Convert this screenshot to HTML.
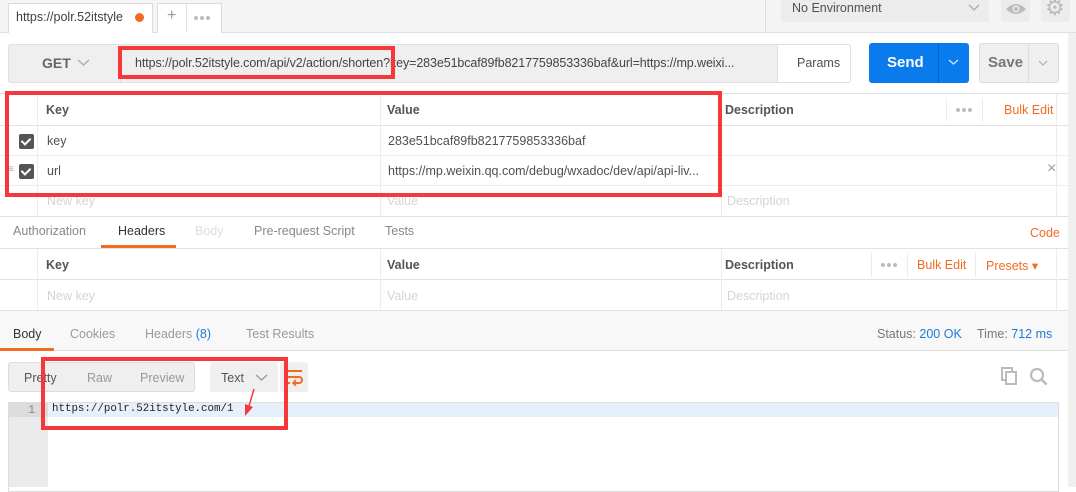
<!DOCTYPE html>
<html><head><meta charset="utf-8"><style>
*{box-sizing:border-box;margin:0;padding:0}
body{width:1076px;height:487px;overflow:hidden;background:#fff;font-family:"Liberation Sans",sans-serif;font-size:12.5px;color:#505050;position:relative}
.a{position:absolute}
.t{position:absolute;white-space:nowrap}
.hl{position:absolute;height:1px;background:#e2e2e2}
.vl{position:absolute;width:1px;background:#ececec}
.or{color:#f26b21}
.ph{color:#d4d4d4}
.b{font-weight:bold;color:#555}
.cb{position:absolute;width:15px;height:15px;background:#555;border-radius:2px}
.cb:after{content:"";position:absolute;left:4px;top:2px;width:4px;height:7px;border:solid #fff;border-width:0 2px 2px 0;transform:rotate(45deg)}
.red{position:absolute;border:4px solid #f7383b}
.dots{position:absolute;width:20px;height:4px;display:flex;gap:2px}
.dots i{display:block;width:4px;height:4px;border-radius:50%;background:#bbb}
</style></head><body>
<!-- tab bar -->
<div class="a" style="left:0;top:0;width:1076px;height:33px;background:#f4f4f4;border-bottom:1px solid #e0e0e0"></div>
<div class="a" style="left:8px;top:3px;width:145px;height:30px;background:#fff;border:1px solid #dcdcdc;border-bottom:none"></div>
<div class="t" style="left:16px;top:10px;color:#404040">https://polr.52itstyle</div>
<div class="a" style="left:135px;top:13px;width:9px;height:9px;border-radius:50%;background:#f26b21"></div>
<div class="a" style="left:157px;top:3px;width:65px;height:30px;background:#fff;border:1px solid #dcdcdc;border-bottom:none"></div>
<div class="vl" style="left:186px;top:4px;height:28px;background:#e0e0e0"></div>
<div class="t" style="left:167px;top:7px;font-size:16px;color:#999">+</div>
<div class="dots" style="left:194px;top:16px"><i></i><i></i><i></i></div>
<div class="vl" style="left:765px;top:0;height:33px;background:#ddd"></div>
<div class="a" style="left:781px;top:0;width:208px;height:22px;background:#ececec;border-radius:0 0 3px 3px"></div>
<div class="t" style="left:792px;top:1px;color:#505050">No Environment</div>
<svg class="a" style="left:968px;top:4px" width="12" height="8"><path d="M1 1l5 5 5-5" stroke="#aaa" fill="none" stroke-width="1.3"/></svg>
<div class="a" style="left:1001px;top:0;width:29px;height:22px;background:#ececec;border-radius:0 0 3px 3px"></div>
<svg class="a" style="left:1005px;top:2px" width="22" height="14"><path d="M1 7Q11-3 21 7Q11 17 1 7Z" fill="#bbb"/><circle cx="11" cy="7" r="3.5" fill="#ececec"/><circle cx="11" cy="7" r="2" fill="#bbb"/></svg>
<div class="a" style="left:1041px;top:0;width:29px;height:22px;background:#ececec;border-radius:0 0 3px 3px"></div>
<div class="t" style="left:1045px;top:-5px;font-size:22px;color:#bbb">⚙</div>
<div class="a" style="left:1068px;top:33px;width:8px;height:454px;background:#f0f0f0"></div>
<!-- request row -->
<div class="a" style="left:8px;top:44px;width:843px;height:39px;background:#efefef;border:1px solid #e0e0e0;border-radius:3px"></div>
<div class="vl" style="left:120px;top:44px;height:39px;background:#e0e0e0"></div>
<div class="t" style="left:42px;top:55px;font-size:14px;font-weight:bold;color:#666">GET</div>
<svg class="a" style="left:77px;top:59px" width="13" height="8"><path d="M1 1l5.5 5 5.5-5" stroke="#aaa" fill="none" stroke-width="1.3"/></svg>
<div class="t" style="left:135px;top:56px;color:#444;letter-spacing:-0.1px">https://polr.52itstyle.com/api/v2/action/shorten?key=283e51bcaf89fb8217759853336baf&amp;url=https://mp.weixi...</div>
<div class="a" style="left:777px;top:44px;width:74px;height:39px;background:#fff;border:1px solid #e0e0e0;border-radius:0 3px 3px 0"></div>
<div class="t" style="left:797px;top:56px">Params</div>
<div class="a" style="left:869px;top:43px;width:100px;height:40px;background:#097bed;border-radius:3px"></div>
<div class="vl" style="left:938px;top:43px;height:40px;background:#0a63c0"></div>
<div class="t" style="left:887px;top:54px;color:#fff;font-weight:bold;font-size:15px">Send</div>
<svg class="a" style="left:948px;top:59px" width="11" height="7"><path d="M1 1l4.5 4 4.5-4" stroke="#cfe4fb" fill="none" stroke-width="1.4"/></svg>
<div class="a" style="left:979px;top:43px;width:80px;height:40px;background:#efefef;border:1px solid #ddd;border-radius:3px"></div>
<div class="vl" style="left:1028px;top:44px;height:38px;background:#ddd"></div>
<div class="t" style="left:988px;top:54px;color:#777;font-weight:bold;font-size:15px">Save</div>
<svg class="a" style="left:1038px;top:60px" width="10" height="6"><path d="M1 1l4 4 4-4" stroke="#aaa" fill="none" stroke-width="1.1"/></svg>
<!-- params table -->
<div class="hl" style="left:0;top:93px;width:1068px"></div>
<div class="hl" style="left:0;top:125px;width:1068px"></div>
<div class="hl" style="left:0;top:155px;width:1068px;background:#eee"></div>
<div class="hl" style="left:0;top:185px;width:1068px;background:#eee"></div>
<div class="hl" style="left:0;top:216px;width:1068px"></div>
<div class="vl" style="left:37px;top:94px;height:122px"></div>
<div class="vl" style="left:380px;top:94px;height:122px"></div>
<div class="vl" style="left:721px;top:94px;height:122px"></div>
<div class="vl" style="left:1056px;top:94px;height:122px"></div>
<div class="t b" style="left:46px;top:103px">Key</div>
<div class="t b" style="left:387px;top:103px">Value</div>
<div class="t b" style="left:725px;top:103px">Description</div>
<div class="vl" style="left:946px;top:98px;height:24px"></div>
<div class="vl" style="left:982px;top:98px;height:24px"></div>
<div class="dots" style="left:956px;top:108px"><i></i><i></i><i></i></div>
<div class="t or" style="left:1004px;top:103px">Bulk Edit</div>
<div class="cb" style="left:19px;top:134px"></div>
<div class="cb" style="left:19px;top:164px"></div>
<div class="t" style="left:8px;top:164px;color:#aaa;font-size:10px">≡</div>
<div class="t" style="left:47px;top:134px">key</div>
<div class="t" style="left:388px;top:134px">283e51bcaf89fb8217759853336baf</div>
<div class="t" style="left:47px;top:164px">url</div>
<div class="t" style="left:388px;top:164px">https://mp.weixin.qq.com/debug/wxadoc/dev/api/api-liv...</div>
<div class="t" style="left:1047px;top:160px;color:#999;font-size:16px">×</div>
<div class="t ph" style="left:47px;top:194px">New key</div>
<div class="t ph" style="left:387px;top:194px">Value</div>
<div class="t ph" style="left:727px;top:194px">Description</div>
<div class="red" style="left:5px;top:91px;width:717px;height:106px"></div>
<div class="red" style="left:118px;top:46px;width:277px;height:33px"></div>
<!-- sub tabs -->
<div class="t" style="left:13px;top:224px;color:#888">Authorization</div>
<div class="t" style="left:118px;top:224px;color:#333">Headers</div>
<div class="a" style="left:101px;top:245px;width:75px;height:3px;background:#f26b21"></div>
<div class="t" style="left:195px;top:224px;color:#ddd">Body</div>
<div class="t" style="left:254px;top:224px;color:#888">Pre-request Script</div>
<div class="t" style="left:385px;top:224px;color:#888">Tests</div>
<div class="t or" style="left:1030px;top:226px">Code</div>
<!-- headers table -->
<div class="hl" style="left:0;top:248px;width:1068px"></div>
<div class="hl" style="left:0;top:279px;width:1068px"></div>
<div class="hl" style="left:0;top:310px;width:1068px"></div>
<div class="vl" style="left:37px;top:249px;height:61px"></div>
<div class="vl" style="left:380px;top:249px;height:61px"></div>
<div class="vl" style="left:721px;top:249px;height:61px"></div>
<div class="vl" style="left:1056px;top:249px;height:61px"></div>
<div class="t b" style="left:46px;top:258px">Key</div>
<div class="t b" style="left:387px;top:258px">Value</div>
<div class="t b" style="left:725px;top:258px">Description</div>
<div class="vl" style="left:871px;top:253px;height:24px"></div>
<div class="vl" style="left:907px;top:253px;height:24px"></div>
<div class="vl" style="left:975px;top:253px;height:24px"></div>
<div class="dots" style="left:881px;top:263px"><i></i><i></i><i></i></div>
<div class="t or" style="left:917px;top:258px">Bulk Edit</div>
<div class="t or" style="left:986px;top:258px">Presets ▾</div>
<div class="t ph" style="left:47px;top:289px">New key</div>
<div class="t ph" style="left:387px;top:289px">Value</div>
<div class="t ph" style="left:727px;top:289px">Description</div>
<!-- response tabs -->
<div class="a" style="left:0;top:311px;width:1068px;height:40px;background:#f8f8f8;border-bottom:1px solid #e0e0e0"></div>
<div class="t" style="left:13px;top:327px;color:#333">Body</div>
<div class="a" style="left:0;top:348px;width:54px;height:3px;background:#f26b21"></div>
<div class="t" style="left:70px;top:327px;color:#999">Cookies</div>
<div class="t" style="left:145px;top:327px;color:#999">Headers <span style="color:#1a7bd8">(8)</span></div>
<div class="t" style="left:246px;top:327px;color:#999">Test Results</div>
<div class="t" style="left:877px;top:327px;color:#777">Status: <span style="color:#1a7bd8">200 OK</span></div>
<div class="t" style="left:977px;top:327px;color:#777">Time: <span style="color:#1a7bd8">712 ms</span></div>
<!-- body controls -->
<div class="a" style="left:8px;top:362px;width:187px;height:30px;background:#efefef;border:1px solid #ddd;border-radius:3px"></div>
<div class="t" style="left:24px;top:371px;color:#555">Pretty</div>
<div class="t" style="left:87px;top:371px;color:#999">Raw</div>
<div class="t" style="left:140px;top:371px;color:#999">Preview</div>
<div class="a" style="left:210px;top:362px;width:68px;height:30px;background:#efefef;border-radius:3px"></div>
<div class="t" style="left:221px;top:371px;color:#555">Text</div>
<svg class="a" style="left:255px;top:374px" width="13" height="8"><path d="M1 1l5.5 5 5.5-5" stroke="#999" fill="none" stroke-width="1.3"/></svg>
<div class="a" style="left:280px;top:362px;width:28px;height:30px;background:#efefef;border-radius:3px"></div>
<svg class="a" style="left:284px;top:368px" width="20" height="18"><path d="M2 3h16M2 9h13a3 3 0 0 1 0 6h-5M2 15h4" stroke="#f26b21" fill="none" stroke-width="2"/><path d="M12 12l-3 3 3 3" stroke="#f26b21" fill="none" stroke-width="1.6"/></svg>
<svg class="a" style="left:1001px;top:367px" width="18" height="18"><rect x="1" y="1" width="10" height="12" fill="none" stroke="#bbb" stroke-width="2"/><rect x="5" y="5" width="10" height="12" fill="#fff" stroke="#bbb" stroke-width="2"/></svg>
<svg class="a" style="left:1029px;top:367px" width="20" height="20"><circle cx="8" cy="8" r="6" fill="none" stroke="#bbb" stroke-width="2.2"/><path d="M12.5 12.5l5 5" stroke="#bbb" stroke-width="2.6"/></svg>
<!-- editor -->
<div class="a" style="left:8px;top:402px;width:1051px;height:90px;border:1px solid #ddd;background:#fff"></div>
<div class="a" style="left:9px;top:403px;width:39px;height:84px;background:#ebebeb"></div>
<div class="a" style="left:48px;top:403px;width:1010px;height:14px;background:#e5f0fc"></div>
<div class="a" style="left:9px;top:403px;width:39px;height:14px;background:#dcdcdc"></div>
<div class="t" style="left:28px;top:403px;font-family:'Liberation Mono',monospace;font-size:12px;color:#888">1</div>
<div class="t" style="left:52px;top:403px;font-family:'Liberation Mono',monospace;font-size:10.8px;color:#222">https://polr.52itstyle.com/1</div>
<div class="red" style="left:41px;top:357px;width:247px;height:73px"></div>
<svg class="a" style="left:240px;top:388px" width="20" height="30"><path d="M14 1L9 18" stroke="#f7383b" stroke-width="1.5"/><path d="M5 16l8 3-8 9z" fill="#f7383b"/></svg>
</body></html>
